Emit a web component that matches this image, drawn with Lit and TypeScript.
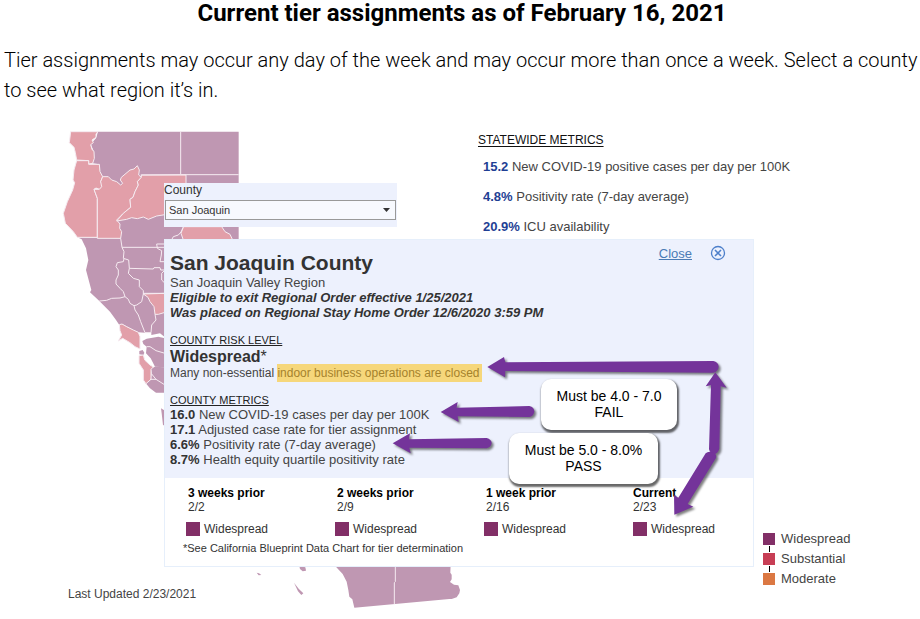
import { LitElement, html, css, svg } from "lit";
import { customElement, state } from "lit/decorators.js";

const STATEWIDE = [
  { value: "15.2", label: "New COVID-19 positive cases per day per 100K" },
  { value: "4.8%", label: "Positivity rate (7-day average)" },
  { value: "20.9%", label: "ICU availability" },
];

const COUNTY_METRICS = [
  { value: "16.0", label: "New COVID-19 cases per day per 100K" },
  { value: "17.1", label: "Adjusted case rate for tier assignment" },
  { value: "6.6%", label: "Positivity rate (7-day average)" },
  { value: "8.7%", label: "Health equity quartile positivity rate" },
];

const WEEKS = [
  { title: "3 weeks prior", date: "2/2", tier: "Widespread" },
  { title: "2 weeks prior", date: "2/9", tier: "Widespread" },
  { title: "1 week prior", date: "2/16", tier: "Widespread" },
  { title: "Current", date: "2/23", tier: "Widespread" },
];

const PURPLE_COUNTIES = [
  "M144 35 138 55 122 72 132 95 128 130 148 133 150 155 158 170 200 303 212 355 82 352 95 358 108 385 115 420 108 450 124 510 120 517 148 543 180 575 198 600 208 615 216 612 250 630 265 637 285 638 304 638 304 645 330 640 345 652 420 652 566 600V35Z",
  "M277 663 290 656 325 650 345 655V742L315 740 302 715 288 700 290 680 280 672Z",
  "M268 693 278 690 283 698 280 705 268 703Z",
  "M303 745 315 740 345 742V818H318L300 805 286 788 303 778 305 760Z",
  "M333 865 345 872V917L339 915 335 880Z",
];

const PINK_COUNTIES = [
  "M62 35H144L138 42 138 52 126 60 130 68 122 74 126 88 132 95 133 115 128 130 116 132V122L80 120 76 98 72 82 58 68Z",
  "M80 122H116V133H148L150 155 158 170 152 185 158 195 155 204 148 208 138 204 132 208 142 235V352H82L70 335 46 310 40 280 52 245 68 210 74 188 69 180 72 150Z",
  "M158 170 175 170 185 180 200 185 212 195 218 190 211 180 214 172 240 150 252 147 262 137 268 150 266 165 274 172 262 185 265 195 255 215 249 232 240 238 242 262 220 280 200 300 210 312 209 325 215 335 212 355H142V235L132 208 148 208 155 200 152 185Z",
  "M274 165H408V290L345 284 320 288 295 298 280 291 262 296 245 293 230 298 200 303 220 280 242 262 240 238 249 232 255 215 265 195 262 185 274 172Z",
  "M400 320H515L525 335 540 343 548 360H400L393 340Z",
  "M280 522 345 520V577L325 583 315 583 312 560 300 545 294 532Z",
  "M208 614 216 612 230 620 250 630 265 637 270 650V687L255 680 240 668 218 655 205 663 215 645 210 632Z",
  "M267 707 280 705 284 720 300 735 310 741 303 748 303 778 288 791 280 780 280 750 267 730Z",
];

const BORDERS = [
  "M392 35V164H566",
  "M272 165 392 164",
  "M342 382H216L212 355",
  "M216 382 222 395 220 415 236 420 238 445 310 447 312 443 330 443 332 450 342 450",
  "M345 372 320 372 322 385 335 392 334 405 330 425 345 425",
  "M222 416 220 425 202 428 198 440 205 450 205 465 198 480 198 492 210 505 220 515 225 530",
  "M148 543 170 541 185 535 210 534 225 530 235 538 240 550 252 557 255 570 265 585 272 605 285 638",
  "M238 445 235 460 250 475 268 480 268 500 280 512 280 522 275 545 260 555 252 557",
  "M280 520H345",
  "M315 583 318 600 305 615 303 638 285 638",
  "M400 322 393 336 385 345 370 350 362 365 342 368",
  "M290 680 300 680 318 692 345 700",
  "M318 778 300 778 M305 762 318 778 345 795",
  "M345 450 335 460 335 480 345 490",
];

@customElement("california-map")
export class CaliforniaMap extends LitElement {
  static styles = css`
    :host {
      display: block;
    }
    svg {
      display: block;
      width: 480px;
      height: 499px;
    }
    .purple {
      fill: #bf97b2;
    }
    .pink {
      fill: #e29fa9;
    }
    .pink,
    .line {
      stroke: #f6ebf1;
      stroke-width: 3;
      stroke-linejoin: round;
    }
    .line {
      fill: none;
    }
  `;

  render() {
    return html`<svg viewBox="-150 0 1440 1497" role="img" aria-label="Map of California counties by tier">
      ${PURPLE_COUNTIES.map((d) => svg`<path class="purple" d=${d} />`)}
      ${PINK_COUNTIES.map((d) => svg`<path class="pink" d=${d} />`)}
      ${BORDERS.map((d) => svg`<path class="line" d=${d} />`)}
      <g transform="translate(570 1320)">
        <path
          class="purple"
          d="M280 12H632L631 38 635 44 635 58 630 66 642 74 655 76 660 90 658 100 650 112 635 117 628 117 343 143 337 118 328 110 325 90 320 65 308 42Z"
        />
        <path class="line" d="M466 12V65L463 68V133" />
        <path class="purple" d="M178 18 196 22 198 32 188 34 180 27Z" />
        <path class="purple" d="M50 38 57 40 64 45 56 46Z" />
        <path class="purple" d="M162 68 176 86 190 100 184 105 174 94Z" />
      </g>
    </svg>`;
  }
}

@customElement("app-root")
export class AppRoot extends LitElement {
  @state() private county = "San Joaquin";

  static styles = css`
    :host {
      display: block;
      background: #fff;
      color: #444;
      font-family: "Liberation Sans", Arial, sans-serif;
      font-size: 13px;
    }
    h1,
    h2,
    h3,
    p,
    ul,
    dl {
      margin: 0;
      padding: 0;
      list-style: none;
    }
    .intro {
      padding: 0 0 15px 4px;
      font-family: Roboto, sans-serif;
      color: #000;
    }
    .intro h1 {
      font-size: 24px;
      line-height: 26px;
      font-weight: 700;
      text-align: center;
    }
    .intro p {
      margin-top: 19px;
      font-size: 20px;
      line-height: 30px;
      font-weight: 300;
    }
    .dashboard {
      position: relative;
      display: grid;
      grid-template-columns: 164px minmax(0, 590px) 1fr;
      grid-template-rows: auto auto 52px;
    }
    .map {
      position: absolute;
      top: 0;
      left: 0;
    }
    .top {
      position: relative;
      grid-column: 2 / 4;
      display: flex;
      align-items: flex-start;
      gap: 81px;
      height: 119px;
    }
    .filter {
      box-sizing: border-box;
      width: 233px;
      margin-top: 63px;
      padding-bottom: 7px;
      background: #edf1fd;
      color: #333;
      font-size: 12px;
      line-height: 14px;
    }
    .filter label {
      display: block;
    }
    .picker {
      display: flex;
      align-items: center;
      margin: 3px 1px 0;
    }
    select {
      box-sizing: border-box;
      flex: 1;
      height: 20px;
      padding: 0 20px 0 3px;
      border: 1px solid #999;
      border-radius: 0;
      background: #f7f9fe;
      color: #333;
      font: 11px "Liberation Sans", Arial, sans-serif;
      appearance: none;
    }
    .caret {
      width: 7px;
      height: 4px;
      margin: 0 6px 0 -13px;
      fill: #333;
      pointer-events: none;
    }
    .statewide {
      padding-top: 9px;
    }
    .statewide h2 {
      margin-bottom: 1px;
      font-size: 12px;
      line-height: 22px;
      font-weight: 400;
      color: #111;
      text-decoration: underline;
      text-underline-offset: 2px;
    }
    .statewide li {
      padding-left: 5px;
      line-height: 30px;
    }
    .statewide b {
      color: #1f3f94;
    }
    .panel {
      position: relative;
      grid-column: 2;
      border: 1px solid #e6effb;
      background: #fff;
    }
    .detail {
      display: flex;
      justify-content: space-between;
      align-items: flex-start;
      padding: 11px 27px 11px 5px;
      background: #edf1fd;
      line-height: 15px;
    }
    .detail h2 {
      font-size: 21px;
      line-height: 24px;
      color: #333;
    }
    .order {
      font-weight: 700;
      font-style: italic;
      color: #333;
    }
    .detail h3 {
      margin-top: 13px;
      font-size: 11px;
      line-height: 14px;
      font-weight: 400;
      color: #222;
      text-decoration: underline;
    }
    .level {
      font-size: 16px;
      line-height: 19px;
      color: #333;
    }
    .note {
      font-size: 12px;
      line-height: 14px;
    }
    mark {
      padding: 2px 2px 2px 0;
      background: #f6d77b;
      color: #a5822c;
    }
    .detail b {
      color: #333;
    }
    .actions {
      display: flex;
      align-items: center;
      gap: 18px;
      margin-top: -6px;
    }
    .actions a {
      color: #4a7bb5;
    }
    .actions button {
      width: 16px;
      height: 16px;
      padding: 0;
      border: 0;
      background: none;
    }
    .actions svg {
      display: block;
      fill: none;
      stroke: #4d7fca;
    }
    .history {
      padding: 8px 0 11px 18px;
      color: #333;
      font-size: 12px;
      line-height: 14px;
    }
    .weeks {
      display: grid;
      grid-template-columns: repeat(3, 149px) 1fr;
      padding-left: 3px;
    }
    .week h3 {
      font-size: 12px;
      line-height: 14px;
      color: #000;
    }
    .week h3,
    .week .date {
      padding-left: 2px;
    }
    .week:last-child h3,
    .week:last-child .date {
      padding-left: 0;
    }
    .tier {
      display: flex;
      gap: 4px;
      margin-top: 8px;
    }
    .swatch {
      width: 14px;
      height: 14px;
      background: #822f67;
    }
    .footnote {
      margin-top: 5px;
      font-size: 11px;
    }
    .arrows {
      position: absolute;
      left: 225px;
      top: 100px;
      width: 370px;
      height: 190px;
      overflow: visible;
      filter: drop-shadow(2px 2px 1px rgba(0, 0, 0, 0.5));
    }
    .arrows path {
      fill: #74349a;
    }
    .callout {
      position: absolute;
      box-sizing: border-box;
      padding-top: 9px;
      height: 51px;
      border-radius: 10px;
      background: #fff;
      box-shadow: 1px 2px 2px 1px rgba(0, 0, 0, 0.6);
      color: #000;
      font-size: 14px;
      line-height: 16px;
      text-align: center;
    }
    .fail {
      left: 376px;
      top: 139px;
      width: 136px;
    }
    .pass {
      left: 344px;
      top: 193px;
      width: 149px;
    }
    .legend {
      position: relative;
      grid-column: 3;
      grid-row: 2 / 4;
      align-self: end;
      padding: 0 0 30px 9px;
    }
    .legend li {
      display: grid;
      grid-template-columns: 12px 1fr;
      column-gap: 6px;
      align-items: center;
      line-height: 20px;
    }
    .key {
      height: 12px;
    }
    .widespread {
      background: #822f67;
    }
    .substantial {
      background: #c73e55;
    }
    .moderate {
      background: #db7843;
    }
    .linked::before {
      content: "";
      display: block;
      width: 1px;
      height: 6px;
      margin: -7px auto 1px;
      background: #000;
    }
    .updated {
      position: relative;
      grid-column: 1 / 3;
      padding: 17px 0 0 68px;
      font-size: 12px;
      line-height: 20px;
    }
  `;

  private onCounty(e: Event) {
    this.county = (e.target as HTMLSelectElement).value;
  }

  render() {
    return html`
      <header class="intro">
        <h1>Current tier assignments as of February 16, 2021</h1>
        <p>
          Tier assignments may occur any day of the week and may occur more than once a week. Select a county to see
          what region it’s in.
        </p>
      </header>
      <main class="dashboard">
        <california-map class="map"></california-map>
        <div class="top">
          <div class="filter">
            <label for="county">County</label>
            <div class="picker">
              <select id="county" @change=${this.onCounty}>
                <option>San Joaquin</option>
              </select>
              <svg class="caret" viewBox="0 0 7 4"><path d="M0 0H7L3.5 4Z" /></svg>
            </div>
          </div>
          <section class="statewide">
            <h2>STATEWIDE METRICS</h2>
            <ul>
              ${STATEWIDE.map((m) => html`<li><b>${m.value}</b> ${m.label}</li>`)}
            </ul>
          </section>
        </div>
        <section class="panel">
          <div class="detail">
            <div>
              <h2>${this.county} County</h2>
              <p>San Joaquin Valley Region</p>
              <p class="order">Eligible to exit Regional Order effective 1/25/2021</p>
              <p class="order">Was placed on Regional Stay Home Order 12/6/2020 3:59 PM</p>
              <h3>COUNTY RISK LEVEL</h3>
              <p class="level"><b>Widespread</b>*</p>
              <p class="note">Many non-essential <mark>indoor business operations are closed</mark></p>
              <h3>COUNTY METRICS</h3>
              <ul>
                ${COUNTY_METRICS.map((m) => html`<li><b>${m.value}</b> ${m.label}</li>`)}
              </ul>
            </div>
            <div class="actions">
              <a href="#">Close</a>
              <button type="button" aria-label="Close panel">
                <svg width="16" height="16" viewBox="0 0 16 16">
                  <circle cx="8" cy="8" r="6.5" stroke-width="1.3" />
                  <path d="M5 5 11 11M11 5 5 11" stroke-width="1.6" />
                </svg>
              </button>
            </div>
          </div>
          <div class="history">
            <div class="weeks">
              ${WEEKS.map(
                (w) => html`<div class="week">
                  <h3>${w.title}</h3>
                  <p class="date">${w.date}</p>
                  <p class="tier"><span class="swatch"></span>${w.tier}</p>
                </div>`
              )}
            </div>
            <p class="footnote">*See California Blueprint Data Chart for tier determination</p>
          </div>
          <svg class="arrows" viewBox="0 0 1110 570" aria-hidden="true">
            <path d="M292 81 342 51 346 67 970 63Q985 66 986 80 985 94 970 98L346 93 345 112Z" />
            <path d="M152 216 203 186 200 203 418 198Q433 202 433 215 430 229 418 231L203 229 206 246Z" />
            <path d="M8 310 60 280 57 298 290 294Q304 298 305 309 303 322 290 325L58 323 62 340Z" />
            <path d="M976 97 1010 143 992 139 988 326Q984 341 972 342 960 340 957 328L963 136 947 139Z" />
            <path d="M853 524 852 465 865 473 947 340Q955 332 968 337 982 343 978 354L893 492 910 500Z" />
          </svg>
          <div class="callout fail">Must be 4.0 - 7.0<br />FAIL</div>
          <div class="callout pass">Must be 5.0 - 8.0%<br />PASS</div>
        </section>
        <ul class="legend">
          <li><span class="key widespread"></span>Widespread</li>
          <li><span class="key substantial linked"></span>Substantial</li>
          <li><span class="key moderate linked"></span>Moderate</li>
        </ul>
        <p class="updated">Last Updated 2/23/2021</p>
      </main>
    `;
  }
}
